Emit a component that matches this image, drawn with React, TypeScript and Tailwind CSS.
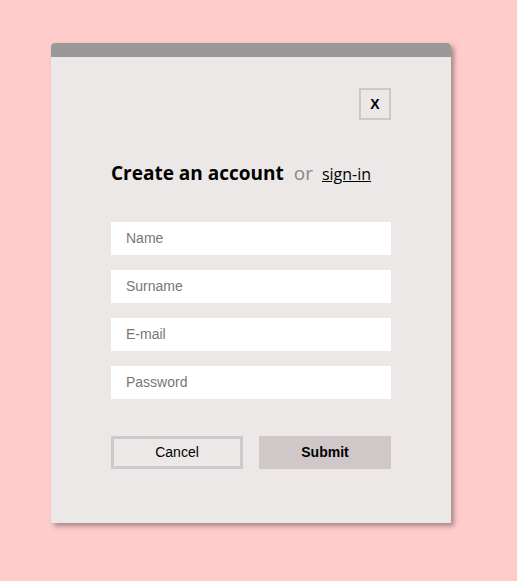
export default function App() {
  return (
    <div className="min-h-[581px] w-full bg-[#ffcccc] pt-[43px] pl-[51px]">
      <div className="w-[400px] rounded-t-[4px] bg-[#ece8e7] shadow-[3px_3px_5px_rgba(0,0,0,0.35)]">
        <div className="h-[14px] rounded-t-[4px] bg-[#999999]" />
        <div className="px-[60px] pt-[31px] pb-[54px]">
          <div className="flex justify-end">
            <button
              type="button"
              className="flex h-[32px] w-[32px] items-center justify-center border-2 border-[#cfcaca] text-[14px] font-bold text-black"
              style={{ fontFamily: 'Arial, "Liberation Sans", sans-serif' }}
            >
              X
            </button>
          </div>
          <div
            className="mt-[39px] flex items-baseline"
            style={{ fontFamily: '"Open Sans", sans-serif' }}
          >
            <h1 className="text-[19px] font-bold text-black">Create an account</h1>
            <span className="ml-[10px] text-[19px] text-[#8a8787]">or</span>
            <a href="#" className="ml-[9px] text-[16px] text-black underline">
              sign-in
            </a>
          </div>
          <form
            className="mt-[34px] flex flex-col gap-[15px]"
            style={{ fontFamily: 'Arial, "Liberation Sans", sans-serif' }}
          >
            <input placeholder="Name" className="h-[33px] w-[280px] bg-white px-[15px] text-[14px] text-black outline-none placeholder:text-[#777]" />
            <input placeholder="Surname" className="h-[33px] w-[280px] bg-white px-[15px] text-[14px] text-black outline-none placeholder:text-[#777]" />
            <input placeholder="E-mail" className="h-[33px] w-[280px] bg-white px-[15px] text-[14px] text-black outline-none placeholder:text-[#777]" />
            <input type="password" placeholder="Password" className="h-[33px] w-[280px] bg-white px-[15px] text-[14px] text-black outline-none placeholder:text-[#777]" />
            <div className="mt-[22px] flex justify-between">
              <button type="button" className="h-[33px] w-[132px] border-[3px] border-[#cccaca] text-[14px] text-black">
                Cancel
              </button>
              <button type="submit" className="h-[33px] w-[132px] bg-[#d0c8c8] text-[14px] font-bold text-black">
                Submit
              </button>
            </div>
          </form>
        </div>
      </div>
    </div>
  )
}
